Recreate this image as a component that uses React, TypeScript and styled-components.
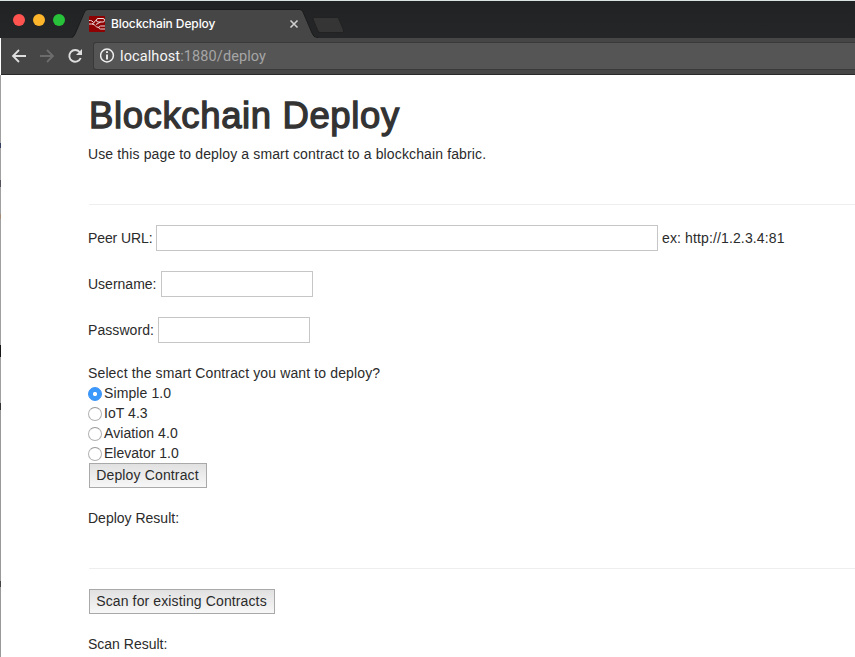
import React from 'react';
import styled, { createGlobalStyle } from 'styled-components';

const Global = createGlobalStyle`
  * { box-sizing: border-box; }
  html, body { margin: 0; padding: 0; background: #fff; overflow: hidden; }
`;

const Window = styled.div`
  width: 855px;
  height: 657px;
  overflow: hidden;
  background: #fff;
  font-family: 'Liberation Sans', Arial, sans-serif;
  font-size: 14px;
  line-height: 20px;
  color: #2b2b2b;
`;

const TabStrip = styled.header`
  display: flex;
  height: 38px;
  padding-left: 1px;
  background: linear-gradient(#dbe3e2 0 1px, #202224 1px, #242628 100%);
`;

const Lights = styled.div`
  display: flex;
  flex: none;
  gap: 8px;
  width: 71px;
  padding: 14px 0 0 12px;
`;

const Light = styled.span<{ $color: string }>`
  width: 12px;
  height: 12px;
  border-radius: 50%;
  background: ${(p) => p.$color};
`;

const Tab = styled.div`
  position: relative;
  flex: none;
  display: flex;
  align-items: center;
  width: 246px;
  height: 38px;
  padding: 10px 19px 0 17px;
`;

const TabShape = styled.svg`
  position: absolute;
  inset: 0;
`;

const Favicon = styled.svg`
  position: relative;
  flex: none;
`;

const TabTitle = styled.span`
  position: relative;
  flex: 1;
  margin-left: 6px;
  font: 500 12px/16px Inter, sans-serif;
  letter-spacing: -0.1px;
  white-space: nowrap;
  color: #fff;
`;

const CloseIcon = styled.svg`
  position: relative;
  flex: none;
`;

const NewTab = styled.svg`
  flex: none;
  margin: 17px 0 0 -6px;
`;

const Toolbar = styled.nav`
  display: flex;
  align-items: center;
  height: 37px;
  padding: 0 0 1px 9px;
  margin-left: 1px;
  background: #464646;
  border-bottom: 1px solid #292929;
`;

const NavIcon = styled.svg`
  flex: none;
  margin-right: 10px;
`;

const AddressBar = styled.div`
  display: flex;
  flex: 1;
  align-items: center;
  height: 28px;
  padding-left: 6px;
  margin-left: -1px;
  background: #555;
  border: 1px solid #393939;
  border-right: 0;
  border-radius: 3px 0 0 3px;
`;

const Address = styled.span`
  padding-top: 2px;
  margin-left: 5px;
  font: 400 14.5px/18px Roboto, sans-serif;
  letter-spacing: 0.1px;
  color: #a6a6a6;
`;

const Host = styled.span`
  color: #f5f5f5;
`;

const Page = styled.main`
  height: 582px;
  padding: 21px 0 0 87px;
  border-left: 1px solid #999;
  border-image: linear-gradient(#a0a0a0 0 69px, #33405f 69px 74px, #a0a0a0 74px 106px, #53525c 106px 113px, #a0a0a0 113px 140px, #a68d7a 140px 145px, #a0a0a0 145px 270px, #151515 270px 282px, #a0a0a0 282px 328px, #333 328px 335px, #999 335px 505px, #444 505px 511px, #999 511px) 1;
  border-image-width: 0 0 0 1px;
`;

const Title = styled.h1`
  margin: 0 0 8px 1px;
  font-size: 36.5px;
  font-weight: 400;
  line-height: 40px;
  letter-spacing: 0.62px;
  -webkit-text-stroke: 1.3px #333;
  white-space: nowrap;
  color: #333;
`;

const Line = styled.p<{ $spacing?: number }>`
  margin: 0;
  height: 20px;
  letter-spacing: ${(p) => p.$spacing ?? 0}px;
  white-space: nowrap;
`;

const Rule = styled.hr`
  height: 1px;
  margin: 40px 0 20px 1px;
  border: 0;
  background: #eee;
`;

const Field = styled.label`
  display: flex;
  align-items: center;
  height: 26px;
  margin-bottom: 20px;
`;

const Caption = styled.span<{ $width: number; $spacing?: number }>`
  flex: none;
  width: ${(p) => p.$width}px;
  letter-spacing: ${(p) => p.$spacing ?? 0}px;
  white-space: nowrap;
`;

const Input = styled.input<{ $width: number }>`
  width: ${(p) => p.$width}px;
  height: 26px;
  padding: 1px 4px;
  margin: 0;
  border: 1px solid #c6c6c6;
  border-radius: 0;
  background: #fff;
  font: inherit;
  outline: 0;
`;

const Hint = styled.span<{ $spacing?: number }>`
  margin-left: 4px;
  letter-spacing: ${(p) => p.$spacing ?? 0}px;
`;

const Option = styled.label<{ $spacing?: number }>`
  display: flex;
  align-items: center;
  height: 20px;
  letter-spacing: ${(p) => p.$spacing ?? 0}px;
`;

const Radio = styled.input`
  appearance: none;
  width: 14px;
  height: 14px;
  margin: 2px 2px 0 0;
  border: 1px solid #b2b2b2;
  border-top-color: #999;
  border-radius: 50%;
  background: #fff;

  &:checked {
    border-color: #3a92f7;
    background: radial-gradient(circle, #fff 0 1.8px, #3b99fc 2.4px);
  }
`;

const Button = styled.button<{ $width: number; $spacing?: number }>`
  display: block;
  width: ${(p) => p.$width}px;
  height: 25px;
  padding: 0 1px 1px 0;
  margin: 0 0 20px 1px;
  border: 1px solid #a9a9a9;
  border-radius: 0;
  background: linear-gradient(#e1e1e1, #f7f7f7);
  font: inherit;
  line-height: 22px;
  letter-spacing: ${(p) => p.$spacing ?? 0}px;
  color: #2b2b2b;
  white-space: nowrap;
`;

const contracts = [
  { name: 'Simple 1.0', spacing: 0.1 },
  { name: 'IoT 4.3', spacing: 0.05 },
  { name: 'Aviation 4.0', spacing: 0.07 },
  { name: 'Elevator 1.0', spacing: 0 },
];

export default function App() {
  return (
    <Window>
      <Global />
      <TabStrip>
        <Lights>
          <Light $color="#ff5350" />
          <Light $color="#fdb52b" />
          <Light $color="#28c13a" />
        </Lights>
        <Tab>
          <TabShape width="246" height="38" viewBox="0 0 246 38">
            <path d="M0 38 L1 37 Q2.500 36 3.500 33 L12.500 12 Q13.500 9.500 16 9.500 H228 Q230 9.500 231 12 L240 33 Q241.500 37 245 37 H246 V38Z" fill="#464646" />
            <path d="M0 37.500 Q2.500 36 3.500 33 L12.500 12 Q13.500 9.500 16 9.500 H228 Q230 9.500 231 12 L240 33 Q241.500 37.500 245 37.500 H246" fill="none" stroke="#1b1b1b" />
          </TabShape>
          <Favicon width="16" height="16" viewBox="0 0 16 16">
            <rect width="16" height="16" rx="1" fill="#8f0000" />
            <g fill="none" stroke="#eadada" strokeWidth="1">
              <path d="M0 8H2.500C6 8 5 4 8 4M3 8C6.500 8 6 11.500 10 11.500" />
              <rect x="7.500" y="2.500" width="8" height="3.500" rx="1.500" />
              <path d="M0 4.500H1.500Q3 4.500 4.500 6.500M7 8.500Q9 7.500 11.500 6M16 10H11.500Q10 10 10 11.500T11.500 13H16" />
            </g>
          </Favicon>
          <TabTitle>Blockchain Deploy</TabTitle>
          <CloseIcon width="10" height="10" viewBox="0 0 10 10">
            <path d="M1.500 1.500L8.500 8.500M8.500 1.500L1.500 8.500" stroke="#d0d0d0" strokeWidth="1.600" />
          </CloseIcon>
        </Tab>
        <NewTab width="34" height="16" viewBox="0 0 34 16">
          <path d="M2 .500H25Q26 .500 26.500 1.500L31.500 13Q32 15.500 30.500 15.500H8Q6.500 15.500 6 14L1 2Q.500 .500 2 .500Z" fill="#353535" stroke="#222" />
        </NewTab>
      </TabStrip>
      <Toolbar>
        <NavIcon width="18" height="18" viewBox="0 0 18 18">
          <path d="M16 9H3.500M9 3L3 9L9 15" fill="none" stroke="#dedede" strokeWidth="1.800" />
        </NavIcon>
        <NavIcon width="18" height="18" viewBox="0 0 18 18">
          <path d="M2 9H14.500M9 3L15 9L9 15" fill="none" stroke="#6c6c6c" strokeWidth="1.800" />
        </NavIcon>
        <NavIcon width="18" height="18" viewBox="0 0 18 18">
          <path d="M13.700 5A5.900 5.900 0 1 0 14.700 11" fill="none" stroke="#dedede" strokeWidth="1.900" />
          <path d="M16 2V8H10Z" fill="#dedede" />
        </NavIcon>
        <AddressBar>
          <svg width="15" height="15" viewBox="0 0 15 15">
            <circle cx="7" cy="7.500" r="6.400" fill="none" stroke="#f0f0f0" strokeWidth="1.500" />
            <path d="M7 3.200V5M7 6.400V11.500" stroke="#f0f0f0" strokeWidth="1.900" />
          </svg>
          <Address><Host>localhost</Host>:1880/deploy</Address>
        </AddressBar>
      </Toolbar>
      <Page>
        <Title>Blockchain Deploy</Title>
        <Line $spacing={0.13}>Use this page to deploy a smart contract to a blockchain fabric.</Line>
        <Rule />
        <Field>
          <Caption $width={68} $spacing={-0.1}>Peer URL:</Caption>
          <Input $width={502} />
          <Hint $spacing={0.13}>ex: http://1.2.3.4:81</Hint>
        </Field>
        <Field>
          <Caption $width={73}>Username:</Caption>
          <Input $width={152} />
        </Field>
        <Field>
          <Caption $width={70} $spacing={0.07}>Password:</Caption>
          <Input $width={152} type="password" />
        </Field>
        <Line $spacing={0.13}>Select the smart Contract you want to deploy?</Line>
        {contracts.map((c, i) => (
          <Option key={c.name} $spacing={c.spacing}>
            <Radio type="radio" name="contract" defaultChecked={i === 0} />
            {c.name}
          </Option>
        ))}
        <Button $width={118} $spacing={0.14}>Deploy Contract</Button>
        <Line>Deploy Result:</Line>
        <Rule />
        <Button $width={186} $spacing={0.12}>Scan for existing Contracts</Button>
        <Line>Scan Result:</Line>
      </Page>
    </Window>
  );
}
